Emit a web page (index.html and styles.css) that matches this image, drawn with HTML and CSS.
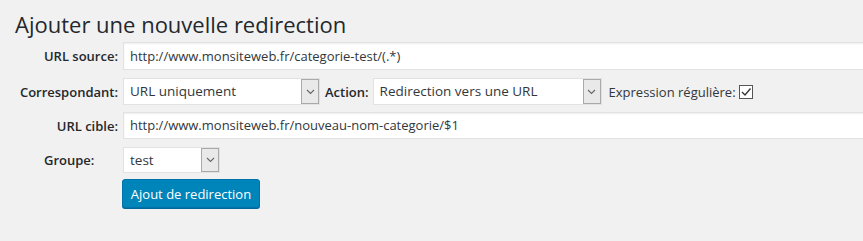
FILE: index.html
```html
<!DOCTYPE html>
<html lang="fr">
<head>
<meta charset="utf-8">
<title>Ajouter une nouvelle redirection</title>
<link rel="stylesheet" href="styles.css">
</head>
<body>
<div class="wrap">
  <h2 class="title">Ajouter une nouvelle redirection</h2>
  <div class="form">
    <div class="row r1">
      <span class="lbl">URL source:</span>
      <div class="text wide">http://www.monsiteweb.fr/categorie-test/(.*)</div>
    </div>
    <div class="row r2">
      <span class="lbl">Correspondant:</span>
      <div class="inline">
        <div class="select sel-match"><span class="val">URL uniquement</span><span class="arrow"><svg width="9" height="6" viewBox="0 0 9 6"><path d="M1 1 L4.5 4.5 L8 1" fill="none" stroke="#666" stroke-width="1.1"/></svg></span></div>
        <span class="lbl-inline">Action:</span>
        <div class="select sel-action"><span class="val">Redirection vers une URL</span><span class="arrow"><svg width="9" height="6" viewBox="0 0 9 6"><path d="M1 1 L4.5 4.5 L8 1" fill="none" stroke="#666" stroke-width="1.1"/></svg></span></div>
        <span class="regex">Expression régulière:</span>
        <span class="check"><svg width="12" height="12" viewBox="0 0 12 12"><path d="M2 6 L5 9 L10.5 2.5" fill="none" stroke="#333" stroke-width="1.3"/></svg></span>
      </div>
    </div>
    <div class="row r3">
      <span class="lbl">URL cible:</span>
      <div class="text wide">http://www.monsiteweb.fr/nouveau-nom-categorie/$1</div>
    </div>
    <div class="row r4">
      <span class="lbl lbl-left">Groupe:</span>
      <div class="select sel-group"><span class="val">test</span><span class="arrow"><svg width="9" height="6" viewBox="0 0 9 6"><path d="M1 1 L4.5 4.5 L8 1" fill="none" stroke="#666" stroke-width="1.1"/></svg></span></div>
    </div>
    <div class="row r5">
      <span class="lbl"></span>
      <button class="button">Ajout de redirection</button>
    </div>
  </div>
</div>
</body>
</html>
```

FILE: styles.css
```css
html, body {
  margin: 0;
  padding: 0;
  background: #f1f1f1;
  overflow: hidden;
}
body {
  width: 863px;
  height: 241px;
  font-family: "Open Sans", "Noto Sans", sans-serif;
  color: #23282d;
  font-size: 13px;
}
.wrap {
  padding-top: 9px;
}
.title {
  margin: 0 0 0 15px;
  font-size: 22px;
  font-weight: 400;
  line-height: 30px;
  color: #23282d;
}
.form {
  display: flex;
  flex-direction: column;
  margin-top: 3px;
}
.row {
  display: flex;
  align-items: center;
}
.r2 { margin-top: 8px; }
.r3 { margin-top: 7px; }
.r4 { margin-top: 8px; }
.r5 { margin-top: 6px; }
.lbl {
  width: 118px;
  flex: 0 0 118px;
  text-align: right;
  font-weight: 600;
  padding-right: 5px;
  box-sizing: content-box;
}
.lbl-left {
  text-align: left;
  width: 79px;
  flex-basis: 79px;
  padding-left: 44px;
  padding-right: 0;
}
.text {
  height: 28px;
  box-sizing: border-box;
  background: #fff;
  border: 1px solid #e2e2e2;
  box-shadow: inset 0 1px 2px rgba(0,0,0,0.07);
  padding: 0 6px;
  line-height: 26px;
  font-size: 13px;
  color: #32373c;
  white-space: nowrap;
}
.wide {
  width: 760px;
  flex: 0 0 760px;
}
.r3 .text { height: 27px; line-height: 25px; }
.inline {
  display: flex;
  align-items: center;
}
.select {
  display: flex;
  align-items: stretch;
  height: 27px;
  box-sizing: border-box;
  background: #fff;
  border: 1px solid #e2e2e2;
  font-size: 13.5px;
  color: #32373c;
}
.select .val {
  flex: 1;
  padding-left: 6px;
  line-height: 25px;
  white-space: nowrap;
}
.select .arrow {
  width: 16px;
  background: #e9e9e9;
  border: 1px solid #a9a9a9;
  display: flex;
  align-items: center;
  justify-content: center;
}
.sel-match { width: 197px; }
.sel-action { width: 229px; }
.sel-group { width: 97px; height: 26px; }
.sel-group .val { line-height: 24px; }
.lbl-inline {
  margin: 0 4px 0 5px;
  font-weight: 600;
}
.regex {
  margin-left: 7px;
  color: #32373c;
}
.check {
  margin-left: 3px;
  width: 14px;
  height: 14px;
  box-sizing: border-box;
  border: 1px solid #555;
  background: #fff;
  display: flex;
  align-items: center;
  justify-content: center;
}
.button {
  height: 29px;
  width: 138px;
  margin-left: -1px;
  box-sizing: border-box;
  background: #0085ba;
  border: 1px solid #0073aa;
  border-radius: 3px;
  box-shadow: 0 1px 0 #006799;
  color: #fff;
  font-family: inherit;
  font-size: 13px;
  padding: 0;
  line-height: 26px;
}
```
